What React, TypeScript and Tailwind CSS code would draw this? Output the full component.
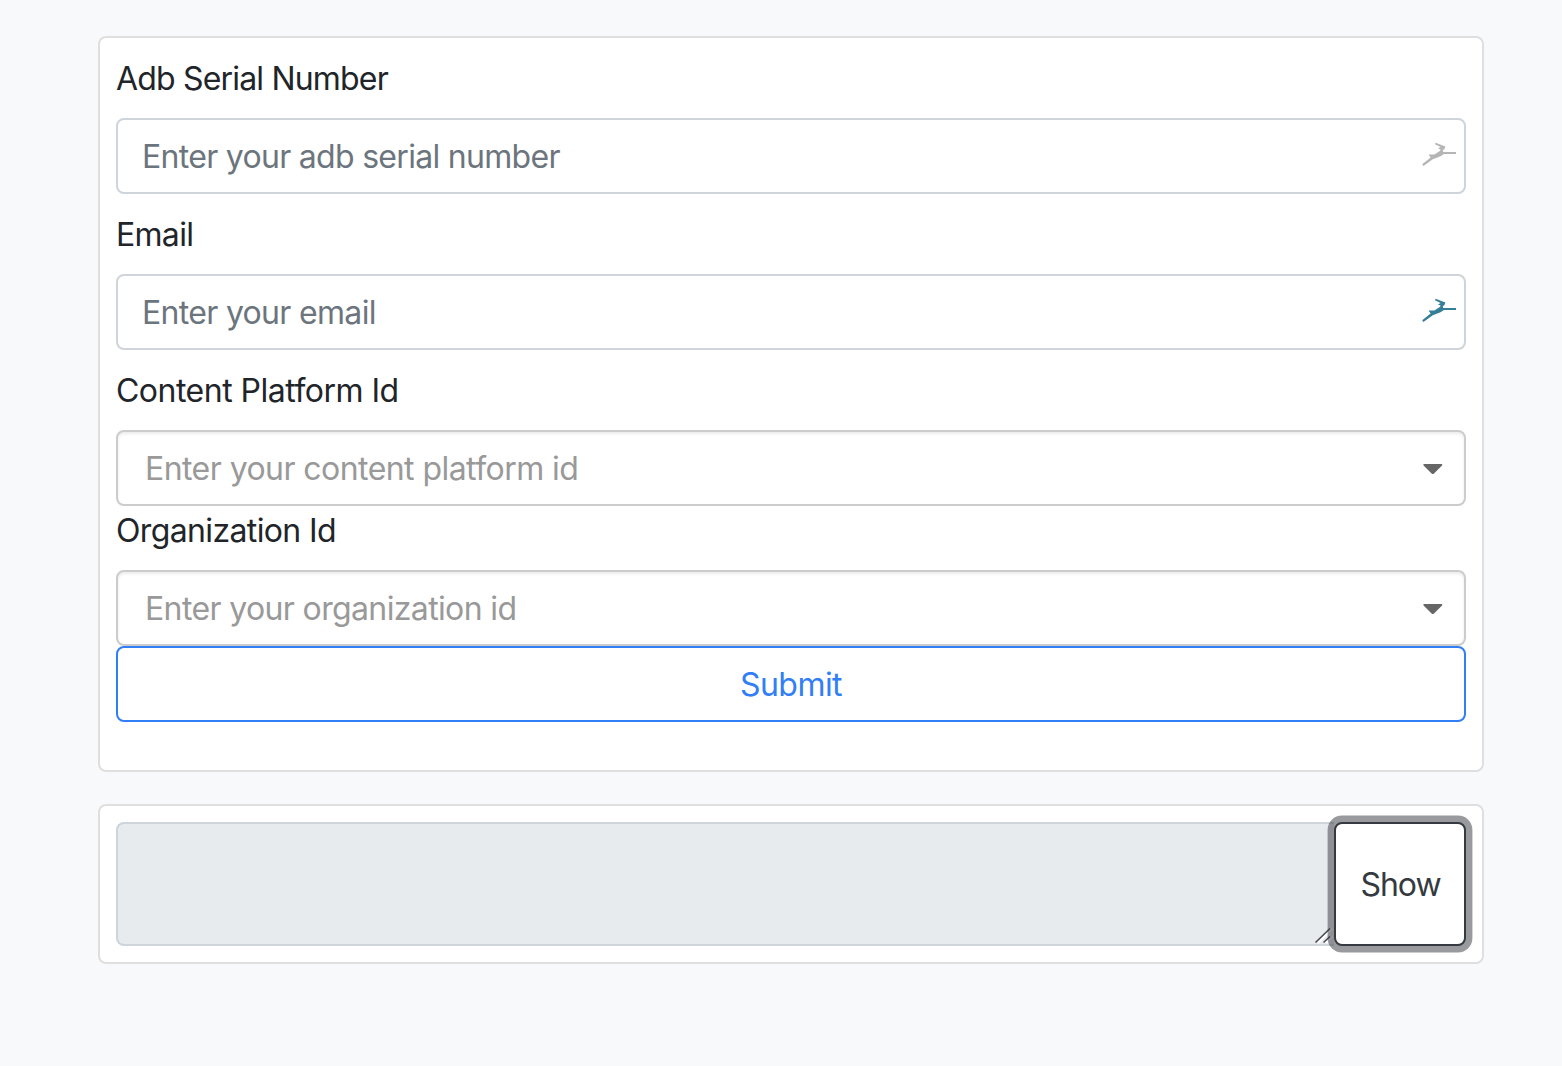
function Leap({ className }: { className: string }) {
  return (
    <svg viewBox="0 0 34 25" className={`h-[25px] w-[34px] ${className}`} fill="currentColor" aria-hidden="true">
      <path d="M0.2 22.3 8.6 15.6 6.6 12.4 12.4 12.5 18.2 8.8 18.6 7.6 16 6.4 18.6 5 13 2.2 13.6 0.8 23.4 4.4 22.3 7.2 20.7 8.2 21.4 10 34 10 34 12 22 12.1 18.5 14.2 10.8 17.2 1.4 24Z" />
    </svg>
  );
}

function Label({ children, className }: { children: string; className: string }) {
  return <label className={`block h-12 text-[32px] leading-[50px] text-[#212529] ${className}`}>{children}</label>;
}

type FieldProps = { label: string; labelClass: string; placeholder: string; textClass: string };

function TextField({ label, labelClass, placeholder, textClass, iconClass }: FieldProps & { iconClass: string }) {
  return (
    <div className="mb-4">
      <Label className={labelClass}>{label}</Label>
      <div className="mt-4 flex h-[76px] items-center rounded-lg border-2 border-[#ced4da] bg-white pr-2 pl-6">
        <input
          placeholder={placeholder}
          className={`h-full min-w-0 flex-1 bg-transparent pt-px text-[32px] outline-none placeholder:text-[#6c757d] ${textClass}`}
        />
        <Leap className={`mb-1 ${iconClass}`} />
      </div>
    </div>
  );
}

function SelectField({ label, labelClass, placeholder, textClass }: FieldProps) {
  return (
    <div>
      <Label className={labelClass}>{label}</Label>
      <div className="mt-4 flex h-[76px] items-center justify-between rounded-lg border-2 border-[#cccccc] bg-white pr-[21px] pl-[27px] shadow-[inset_0_2px_3px_rgba(0,0,0,0.08)]">
        <span className={`pt-[2px] text-[32px] text-[#999999] ${textClass}`}>{placeholder}</span>
        <svg viewBox="0 0 20 12" className="mt-[2px] h-3 w-5" fill="#666666" aria-hidden="true">
          <path d="M1.2 1H18.4Q20 1.2 18.8 2.7L11 10.5Q9.8 11.6 8.6 10.5L0.8 2.7Q-0.4 1.2 1.2 1Z" />
        </svg>
      </div>
    </div>
  );
}

export default function App() {
  return (
    <main className="flex min-h-screen flex-col gap-8 bg-[#f8f9fa] pt-9 pr-[78px] pl-[98px] font-['Inter','Liberation_Sans',sans-serif]">
      <form className="rounded-lg border-2 border-[#dfdfdf] bg-white px-4 pt-4 pb-12">
        <TextField
          label="Adb Serial Number"
          labelClass="tracking-[-0.82px]"
          placeholder="Enter your adb serial number"
          textClass="tracking-[-0.7px]"
          iconClass="text-[#b5b5b5]"
        />
        <TextField
          label="Email"
          labelClass="tracking-[-0.7px]"
          placeholder="Enter your email"
          textClass="tracking-[-0.68px]"
          iconClass="text-[#347f98]"
        />
        <SelectField
          label="Content Platform Id"
          labelClass="tracking-[-0.51px]"
          placeholder="Enter your content platform id"
          textClass="tracking-[-0.56px]"
        />
        <SelectField
          label="Organization Id"
          labelClass="tracking-[-0.63px]"
          placeholder="Enter your organization id"
          textClass="tracking-[-0.63px]"
        />
        <button
          type="button"
          className="h-[76px] w-full rounded-lg border-2 border-[#317ef7] pt-[2px] text-[32px] tracking-[-0.55px] text-[#317ef7]"
        >
          Submit
        </button>
      </form>
      <section className="flex h-40 rounded-lg border-2 border-[#dfdfdf] bg-white p-4">
        <div className="flex flex-1 items-end justify-end rounded-l-lg border-2 border-r-0 border-[#ced4da] bg-[#e8ebee]">
          <svg viewBox="0 0 20 18" className="h-[18px] w-5" fill="none" aria-hidden="true">
            <path d="M3.5 16 18 1.5M11.5 16 18 9.5" stroke="#fff" strokeWidth="2" transform="translate(0.5 1)" />
            <path d="M1.5 16.5 16 2.5M9.5 16.5 16 10.5" stroke="#4a4c50" strokeWidth="1.6" />
          </svg>
        </div>
        <button
          type="button"
          className="relative w-[132px] rounded-lg border-2 border-[#343a40] bg-white pt-[2px] pl-px text-[32px] tracking-[-1px] text-[#343a40] shadow-[0_0_0_6.4px_rgba(52,54,62,0.5)]"
        >
          Show
        </button>
      </section>
    </main>
  );
}
